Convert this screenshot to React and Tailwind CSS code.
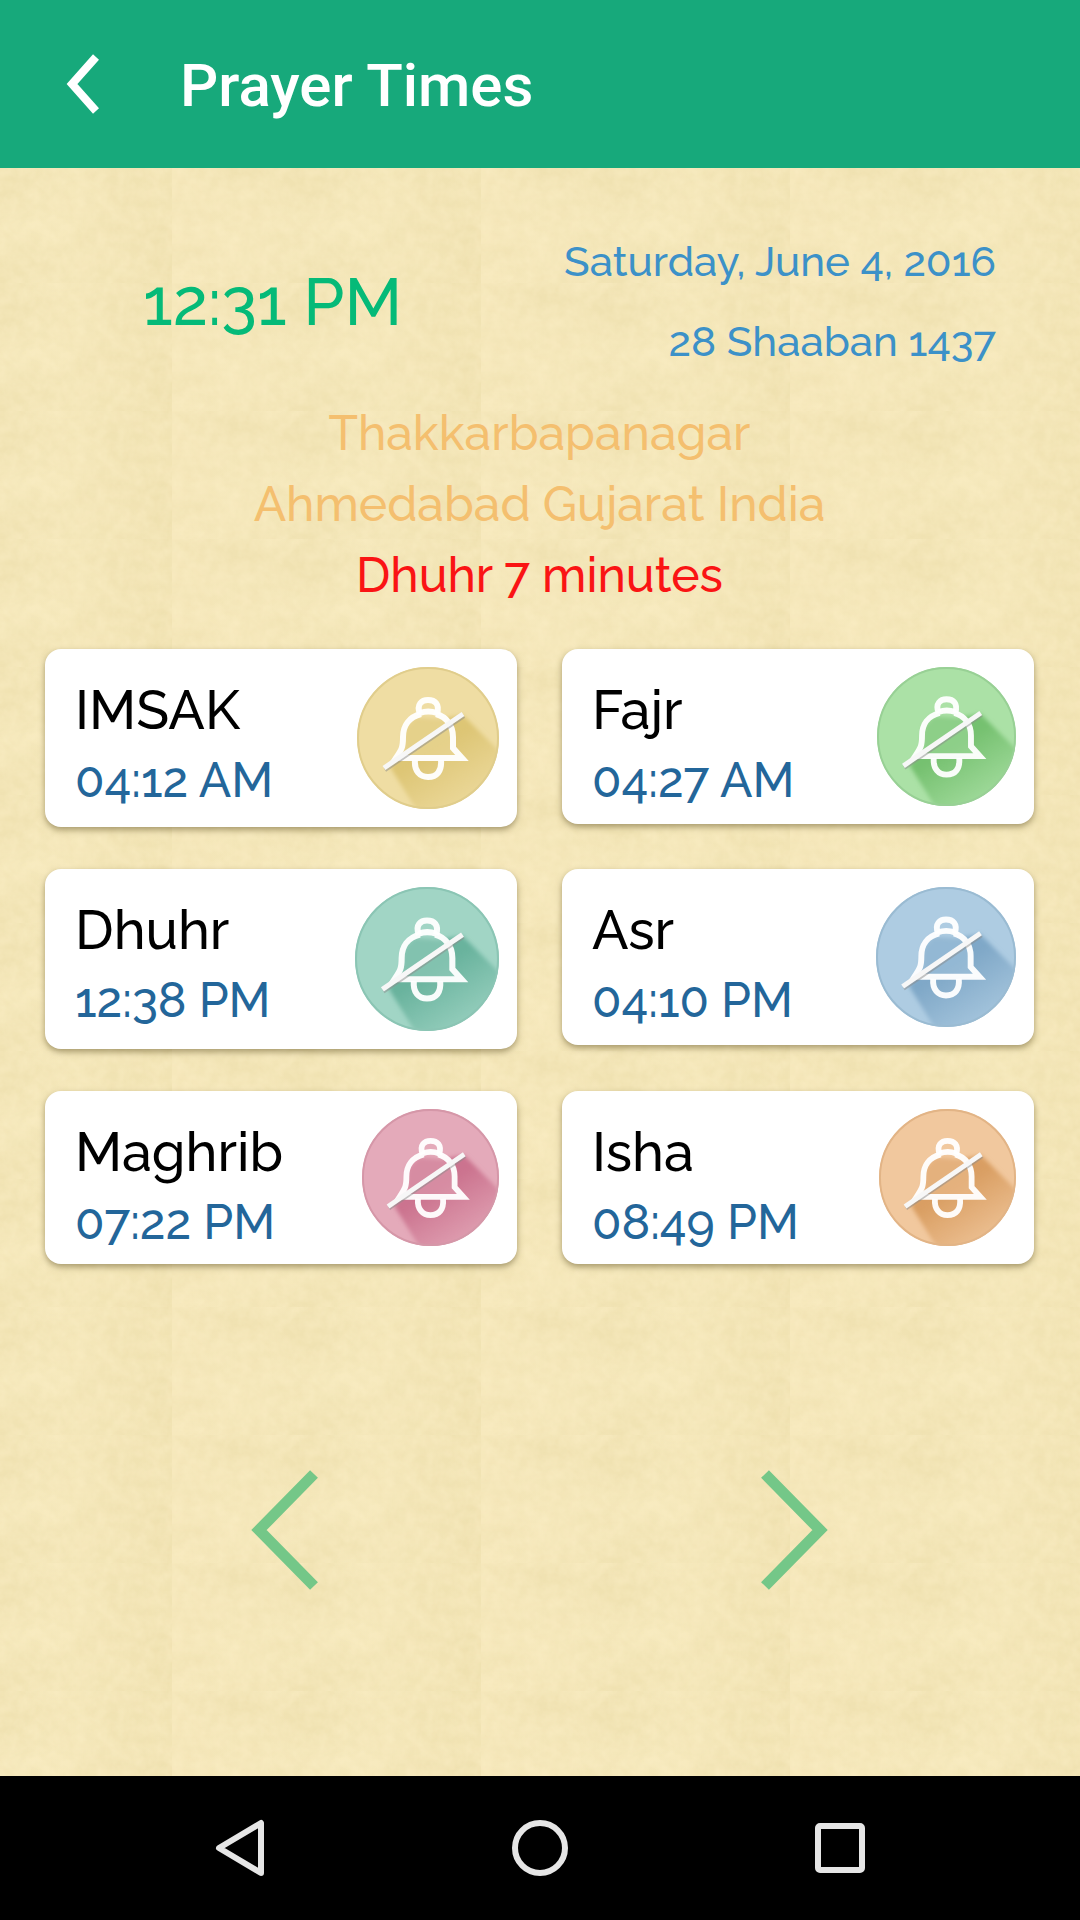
import React from 'react';

const PRAYERS = [
  { name: 'IMSAK', time: '04:12 AM', fill: '#efdda3', rim: '#e0cd8c', shade: '#dcc472', size: 'size-[142px]' },
  { name: 'Fajr', time: '04:27 AM', fill: '#abe1a6', rim: '#98d095', shade: '#73bf6d', size: 'size-[139px]' },
  { name: 'Dhuhr', time: '12:38 PM', fill: '#a1d5c5', rim: '#8bc5b4', shade: '#66b19b', size: 'size-[144px]' },
  { name: 'Asr', time: '04:10 PM', fill: '#aecce2', rim: '#9abbd2', shade: '#7da6c6', size: 'size-[140px]' },
  { name: 'Maghrib', time: '07:22 PM', fill: '#e4aaba', rim: '#d597a8', shade: '#ca708c', size: 'size-[137px]' },
  { name: 'Isha', time: '08:49 PM', fill: '#f1c89e', rim: '#e2b486', shade: '#d89c5f', size: 'size-[137px]' },
];

// Paper grain, one small noise tile repeated over the whole page
const PaperTexture = () => (
  <svg className="absolute inset-0 -z-10 h-full w-full" aria-hidden="true">
    <defs>
      <linearGradient id="tone">
        <stop offset="0" stopColor="#f7e9bd" />
        <stop offset="0.5" stopColor="#f5e8bb" />
        <stop offset="1" stopColor="#f3e5b6" />
      </linearGradient>
      <filter id="blotch" x="0" y="0" width="100%" height="100%" colorInterpolationFilters="sRGB">
        <feTurbulence type="fractalNoise" baseFrequency="0.012 0.022" numOctaves="2" seed="8" />
        <feColorMatrix values="0 0 0 0 0.91  0 0 0 0 0.85  0 0 0 0 0.64  0.9 0 0 0 -0.25" />
      </filter>
      <filter id="grain" x="0" y="0" width="100%" height="100%" colorInterpolationFilters="sRGB">
        <feTurbulence type="fractalNoise" baseFrequency="0.09" numOctaves="3" seed="3" />
        <feColorMatrix values="0 0 0 0 1  0 0 0 0 0.95  0 0 0 0 0.8  0.6 0 0 0 -0.15" />
      </filter>
      <pattern id="paper" x="172" y="115" width="309" height="128" patternUnits="userSpaceOnUse">
        <rect width="309" height="128" fill="url(#tone)" />
        <rect width="309" height="128" filter="url(#blotch)" />
        <rect width="309" height="128" filter="url(#grain)" />
      </pattern>
    </defs>
    <rect width="100%" height="100%" fill="url(#paper)" />
  </svg>
);

const MutedBell = ({ id, fill, rim, shade, size }) => (
  <svg viewBox="0 0 142 142" className={size} fill="none" aria-hidden="true">
    <defs>
      <linearGradient id={`shade-${id}`} x1="70" y1="86" x2="104" y2="140" gradientUnits="userSpaceOnUse">
        <stop offset="0" stopColor={shade} stopOpacity="0.95" />
        <stop offset="1" stopColor={shade} stopOpacity="0.2" />
      </linearGradient>
      <filter id={`soft-${id}`}>
        <feGaussianBlur stdDeviation="2" />
      </filter>
      <clipPath id={`disc-${id}`}>
        <circle cx="71" cy="71" r="71" />
      </clipPath>
    </defs>
    <circle cx="71" cy="71" r="71" fill={fill} />
    <g clipPath={`url(#disc-${id})`}>
      <path
        d="M47 62 L58 50 L82 52 L106 48 L148 90 L150 150 L64 150 L33 100 L46 84 Z"
        fill={`url(#shade-${id})`}
        filter={`url(#soft-${id})`}
      />
    </g>
    <path d="M64 47 C52 50 46 59 46 70 C46 80 45 82 39 91 H105 L96 81 V70 C96 59 90 50 79 47 Z" fill={fill} fillOpacity="0.45" />
    <circle cx="71" cy="71" r="70" stroke={rim} strokeWidth="2" />
    <g stroke="#fff" strokeWidth="6" strokeOpacity="0.95" strokeLinejoin="miter">
      <path d="M63 47 C59 37 65 33 71 33 C78 33 83 37 80 47" />
      <path d="M63 46 Q71 43 80 46" />
      <path d="M64 47 C52 50 46 59 46 70 C46 80 45 82 39 91 H105 L96 81 V70 C96 59 90 50 79 47" />
      <path d="M58 93 C57 104 63 110 71 110 C80 110 85 104 84 93" />
    </g>
    <path d="M28 103 L107 49" stroke="#8a8a8a" strokeOpacity="0.5" strokeWidth="4" />
    <path d="M27 101 L106 47" stroke="#f7f7f7" strokeWidth="5" />
  </svg>
);

const PrayerCard = ({ name, time, ...bell }) => (
  <article className="flex items-start justify-between rounded-2xl bg-white pl-[30px] font-medium shadow-[0_3px_6px_rgba(90,75,30,0.5)]">
    <div className="pt-[26px]">
      <h2 className="text-[54px] leading-[70px] text-black">{name}</h2>
      <p className="text-5xl leading-[70px] text-[#23669a]">{time}</p>
    </div>
    <button type="button" aria-label={`Toggle ${name} alarm`} className="m-[18px] shrink-0">
      <MutedBell id={name} {...bell} />
    </button>
  </article>
);

const App = () => {
  return (
    <div className="flex min-h-screen flex-col font-['Raleway','Lato',sans-serif] oldstyle-nums">
      <header className="flex h-[168px] items-center bg-[#17a97b] text-white">
        <button type="button" aria-label="Back" className="ml-[66px]">
          <svg viewBox="0 0 36 62" className="h-[62px] w-9" fill="none">
            <path d="M30 4 L6 31 L30 58" stroke="currentColor" strokeWidth="8" />
          </svg>
        </button>
        <h1 className="ml-[78px] pt-1 font-['Roboto',sans-serif] text-[60px] font-medium leading-[72px]">Prayer Times</h1>
      </header>

      <main className="relative isolate flex grow flex-col pl-[45px] pr-[46px] pt-[54px]">
        <PaperTexture />

        <section className="flex items-center justify-between pl-[98px] pr-[38px] font-medium">
          <p className="text-[66px] leading-[80px] text-[#05ba78]">12:31 PM</p>
          <div className="text-right text-[42px] leading-[80px] text-[#3c91c8]">
            <p>Saturday, June 4, 2016</p>
            <p>28 Shaaban 1437</p>
          </div>
        </section>

        <section className="mt-4 text-center text-5xl font-medium leading-[71px] text-[#f4bf6f]">
          <p>Thakkarbapanagar</p>
          <p>Ahmedabad Gujarat India</p>
          <p className="text-[#fa1414]">Dhuhr 7 minutes</p>
        </section>

        <section className="mt-[38px] grid grid-cols-2 items-start gap-x-[45px] gap-y-[42px]">
          {PRAYERS.map((prayer) => (
            <PrayerCard key={prayer.name} {...prayer} />
          ))}
        </section>

        <nav className="flex grow items-center justify-between px-[205px] pt-5 text-[#74c788]">
          <button type="button" aria-label="Previous day">
            <svg viewBox="0 0 70 122" className="h-[122px] w-[70px]" fill="none">
              <path d="M64 5 L9 61 L64 117" stroke="currentColor" strokeWidth="11" />
            </svg>
          </button>
          <button type="button" aria-label="Next day">
            <svg viewBox="0 0 70 122" className="h-[122px] w-[70px]" fill="none">
              <path d="M6 5 L61 61 L6 117" stroke="currentColor" strokeWidth="11" />
            </svg>
          </button>
        </nav>
      </main>

      <footer className="flex h-36 items-center justify-between bg-black px-[210px] text-[#e6e6e6]">
        <button type="button" aria-label="System back">
          <svg viewBox="0 0 60 60" className="size-[60px]" fill="none" stroke="currentColor" strokeWidth="6" strokeLinejoin="round">
            <path d="M51 5 V55 L9 30 Z" />
          </svg>
        </button>
        <button type="button" aria-label="Home">
          <svg viewBox="0 0 60 60" className="size-[60px]" fill="none" stroke="currentColor" strokeWidth="6">
            <circle cx="30" cy="30" r="25" />
          </svg>
        </button>
        <button type="button" aria-label="Recent apps">
          <svg viewBox="0 0 60 60" className="size-[60px]" fill="none" stroke="currentColor" strokeWidth="6">
            <rect x="8" y="8" width="44" height="44" rx="2" />
          </svg>
        </button>
      </footer>
    </div>
  );
};

export default App;
